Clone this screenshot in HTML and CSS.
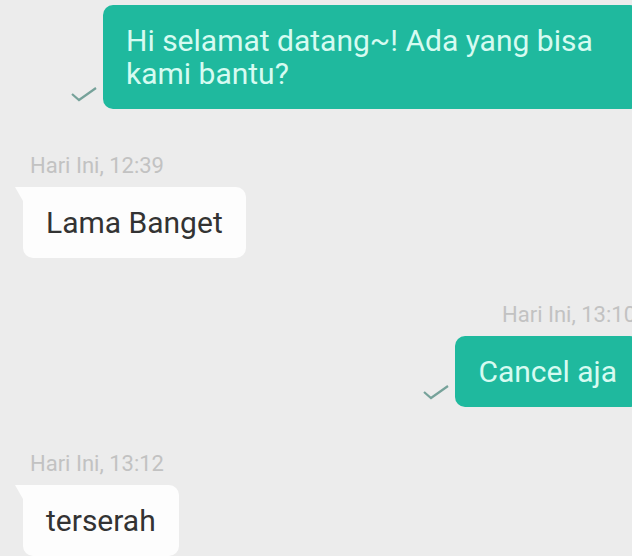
FILE: index.html
```html
<!DOCTYPE html>
<html lang="id">
<head>
    <meta charset="UTF-8">
    <meta name="viewport" content="width=device-width, initial-scale=1.0">
    <title>Chat</title>
    <link rel="stylesheet" href="styles.css">
</head>
<body>
    <div class="chat">
        <div class="msg out first">
            <div class="row">
                <svg class="tick" viewBox="0 0 28 16"><path d="M2 8 L9 14 L26 2"/></svg>
                <div class="bubble">Hi selamat datang~! Ada yang bisa kami bantu?</div>
            </div>
        </div>

        <div class="msg in">
            <div class="time">Hari Ini, 12:39</div>
            <div class="row">
                <div class="bubble">Lama Banget</div>
            </div>
        </div>

        <div class="msg out">
            <div class="time">Hari Ini, 13:10</div>
            <div class="row">
                <svg class="tick" viewBox="0 0 28 16"><path d="M2 8 L9 14 L26 2"/></svg>
                <div class="bubble">Cancel aja</div>
            </div>
        </div>

        <div class="msg in">
            <div class="time">Hari Ini, 13:12</div>
            <div class="row">
                <div class="bubble">terserah</div>
            </div>
        </div>
    </div>
</body>
</html>
```

FILE: styles.css
```css
body {
    margin: 0;
    padding: 0;
    width: 632px;
    height: 556px;
    overflow: hidden;
    background-color: #ececec;
    font-family: Roboto, "Noto Sans", sans-serif;
}
.chat {
    width: 640px;
    box-sizing: border-box;
    padding: 5px 0 0 23px;
    display: flex;
    flex-direction: column;
}
.msg {
    display: flex;
    flex-direction: column;
    margin-top: 45px;
}
.msg.in {
    align-items: flex-start;
}
.msg.out {
    align-items: flex-end;
}
.msg.first {
    margin-top: 0;
}
.time {
    font-size: 22px;
    line-height: 24px;
    color: #c2c2c2;
    margin-bottom: 9px;
    white-space: nowrap;
}
.msg.in .time {
    margin-left: 7px;
}
.msg.out .time {
    margin-right: 4px;
}
.row {
    display: flex;
    align-items: flex-end;
    gap: 5px;
}
.tick {
    width: 28px;
    height: 16px;
    margin-bottom: 7px;
    fill: none;
    stroke: #76a29a;
    stroke-width: 2.2;
}
.bubble {
    font-size: 30px;
    line-height: 33px;
    padding: 19px 23px;
    border-radius: 10px;
    max-width: 537px;
    box-sizing: border-box;
}
.out .bubble {
    background-color: #1fb99e;
    color: #d6fbf1;
}
.in .bubble {
    position: relative;
    background-color: #fdfdfd;
    color: #333;
    border-top-left-radius: 0;
}
.in .bubble::before {
    content: '';
    position: absolute;
    left: -8px;
    top: 0;
    border-top: 14px solid #fdfdfd;
    border-left: 8px solid transparent;
}
```
